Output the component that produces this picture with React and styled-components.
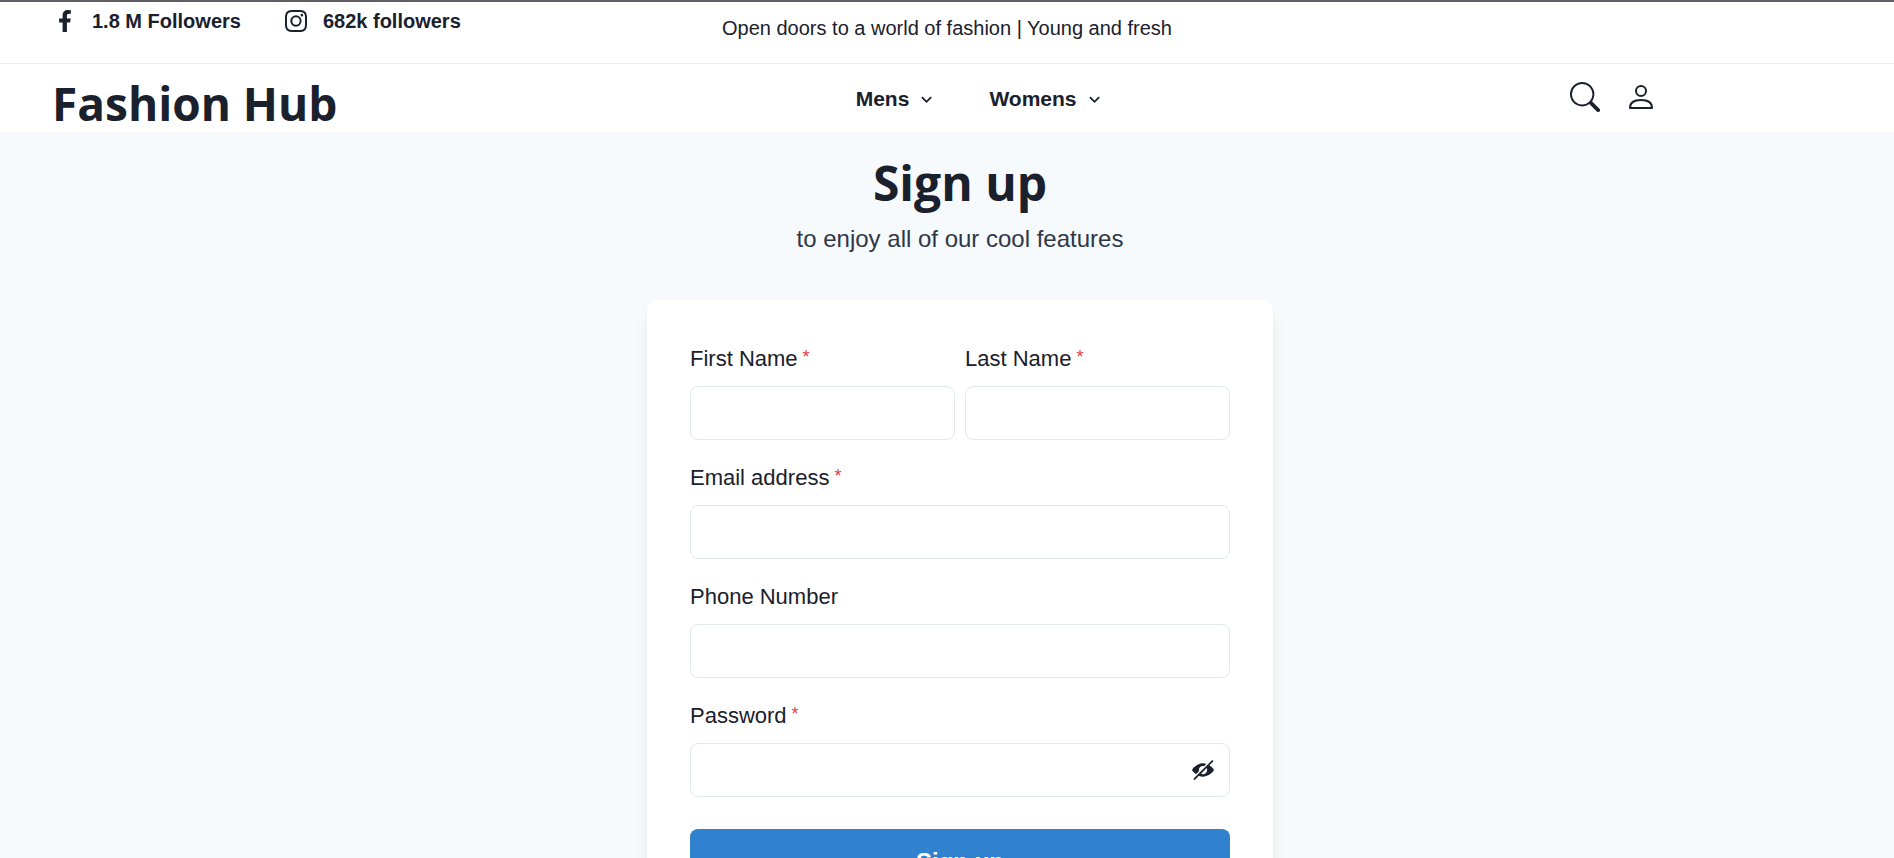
import React, { useState } from "react";
import styled, { createGlobalStyle } from "styled-components";
import { BsInstagram, BsSearch } from "react-icons/bs";
import { FaFacebookF } from "react-icons/fa";

const GlobalStyle = createGlobalStyle`
  *, *::before, *::after { box-sizing: border-box; }
  html { scrollbar-width: none; }
  body {
    margin: 0;
    background: #f7fafc;
    color: #1a202c;
    font-family: "Liberation Sans", Arial, sans-serif;
    font-size: 22px;
    line-height: 32px;
  }
  h1, p { margin: 0; }
  svg { display: block; flex-shrink: 0; }
`;

const TopBar = styled.div`
  display: grid;
  grid-template-columns: 1fr auto 1fr;
  align-items: start;
  height: 64px;
  padding: 3px 54px 0;
  background: #fff;
  border-top: 2px solid #615d64;
  border-bottom: 1px solid #ebebed;
`;

const Followers = styled.div`
  display: flex;
  gap: 44px;
`;

const FollowerLink = styled.a`
  display: flex;
  align-items: center;
  gap: 16px;
  color: inherit;
  font-size: 20px;
  font-weight: 700;
  line-height: 32px;
  text-decoration: none;
`;

const Tagline = styled.p`
  padding-top: 7px;
  font-size: 20px;
  line-height: 32px;
`;

const Header = styled.header`
  display: grid;
  grid-template-columns: 45% 40% 15%;
  height: 68px;
  padding: 0 56px 0 52px;
  background: #fff;
`;

const Title = styled.h1`
  font-family: "Open Sans", "Noto Sans", sans-serif;
  font-size: ${({ $size = 46 }) => $size}px;
  font-weight: 700;
  line-height: 60px;
`;

const Logo = styled(Title).attrs({ as: "a", href: "#home" })`
  padding-top: 9px;
  color: inherit;
  text-decoration: none;
  white-space: nowrap;
`;

const Nav = styled.nav`
  display: flex;
  align-items: flex-start;
  gap: 52px;
  padding-top: 19px;
`;

const PlainButton = styled.button`
  display: flex;
  align-items: center;
  padding: 0;
  border: 0;
  background: none;
  color: inherit;
  font: inherit;
  cursor: pointer;
`;

const NavButton = styled(PlainButton)`
  gap: 7px;
  font-size: 21px;
  font-weight: 700;
`;

const Actions = styled.div`
  display: flex;
  align-items: center;
  align-self: start;
  gap: 29px;
  padding-top: 18px;
`;

const Main = styled.main`
  display: flex;
  flex-direction: column;
  align-items: center;
  padding: 21px 0 65px 26px;
  text-align: center;
`;

const Subtitle = styled.p`
  padding: 8px 0 43px;
  color: #2d3748;
  font-size: 24px;
  line-height: 36px;
`;

const Card = styled.form`
  display: flex;
  flex-direction: column;
  gap: 22px;
  width: 100%;
  max-width: 626px;
  padding: 43px;
  border-radius: 11px;
  background: #fff;
  box-shadow: 0 14px 20px -4px rgba(0, 0, 0, 0.1), 0 5px 8px -3px rgba(0, 0, 0, 0.05);
  text-align: left;
`;

const NameRow = styled.div`
  display: grid;
  grid-template-columns: 1fr 1fr;
  gap: 10px;
`;

const FieldBox = styled.div`
  display: flex;
  flex-direction: column;
  gap: 11px;
`;

const Label = styled.label`
  font-size: 22px;
  line-height: 32px;
`;

const Star = styled.span`
  color: #e53e3e;
  font-size: 18px;
  line-height: 18px;
  vertical-align: 3px;
`;

const InputWrap = styled.div`
  position: relative;
`;

const Input = styled.input`
  display: block;
  width: 100%;
  height: 54px;
  padding: 0 21px;
  border: 1px solid #e2e8f0;
  border-radius: 8px;
  background: #fff;
  color: inherit;
  font: inherit;
`;

const RevealButton = styled(PlainButton)`
  position: absolute;
  top: 0;
  right: 0;
  justify-content: center;
  width: 54px;
  height: 54px;
`;

const SubmitButton = styled.button`
  height: 65px;
  margin-top: 10px;
  border: 0;
  border-radius: 8px;
  background: #3182ce;
  color: #fff;
  font: inherit;
  font-size: 24px;
  font-weight: 700;
  cursor: pointer;
`;

const ChevronDown = () => (
  <svg width="21" height="21" viewBox="0 0 24 24" fill="currentColor" aria-hidden="true">
    <path d="M16.59 8.59L12 13.17 7.41 8.59 6 10l6 6 6-6z" />
  </svg>
);

const Person = () => (
  <svg
    width="24"
    height="24"
    viewBox="0 0 24 24"
    fill="none"
    stroke="currentColor"
    strokeWidth="2"
    strokeLinejoin="round"
    aria-hidden="true"
  >
    <circle cx="12" cy="6" r="5" />
    <path d="M1 23h22c0-5-4-8-11-8S1 18 1 23z" />
  </svg>
);

const EyeOff = () => (
  <svg width="22" height="22" viewBox="0 0 24 24" fill="currentColor" aria-hidden="true">
    <path d="M23.2,10.549a20.954,20.954,0,0,0-4.3-3.6l4-3.995a1,1,0,1,0-1.414-1.414l-.018.018a.737.737,0,0,1-.173.291l-19.5,19.5c-.008.007-.018.009-.026.017a1,1,0,0,0,1.631,1.088l4.146-4.146a11.26,11.26,0,0,0,4.31.939h.3c4.256,0,8.489-2.984,11.051-5.8A2.171,2.171,0,0,0,23.2,10.549ZM16.313,13.27a4.581,4.581,0,0,1-3,3.028,4.3,4.3,0,0,1-3.1-.19.253.253,0,0,1-.068-.407l5.56-5.559a.252.252,0,0,1,.407.067A4.3,4.3,0,0,1,16.313,13.27Z" />
    <path d="M7.615,13.4a.244.244,0,0,0,.061-.24A4.315,4.315,0,0,1,7.5,12,4.5,4.5,0,0,1,12,7.5a4.276,4.276,0,0,1,1.16.173.244.244,0,0,0,.24-.062l1.941-1.942a.254.254,0,0,0-.1-.421A10.413,10.413,0,0,0,12,4.75C7.7,4.692,3.4,7.7.813,10.549a2.15,2.15,0,0,0-.007,2.9,21.209,21.209,0,0,0,3.438,3.03.256.256,0,0,0,.326-.029Z" />
  </svg>
);

function Field({ id, label, type = "text", required, children }) {
  return (
    <FieldBox>
      <Label htmlFor={id}>
        {label}
        {required && <Star aria-hidden="true"> *</Star>}
      </Label>
      <InputWrap>
        <Input id={id} name={id} type={type} required={required} />
        {children}
      </InputWrap>
    </FieldBox>
  );
}

export default function App() {
  const [visible, setVisible] = useState(false);
  return (
    <>
      <GlobalStyle />
      <TopBar>
        <Followers>
          <FollowerLink href="#facebook">
            <FaFacebookF size={22} />
            1.8 M Followers
          </FollowerLink>
          <FollowerLink href="#instagram">
            <BsInstagram size={22} />
            682k followers
          </FollowerLink>
        </Followers>
        <Tagline>Open doors to a world of fashion | Young and fresh</Tagline>
      </TopBar>
      <Header>
        <Logo>Fashion Hub</Logo>
        <Nav>
          <NavButton type="button">
            Mens <ChevronDown />
          </NavButton>
          <NavButton type="button">
            Womens <ChevronDown />
          </NavButton>
        </Nav>
        <Actions>
          <PlainButton type="button" aria-label="Search">
            <BsSearch size={30} />
          </PlainButton>
          <PlainButton type="button" aria-label="Account">
            <Person />
          </PlainButton>
        </Actions>
      </Header>
      <Main>
        <Title $size={48}>Sign up</Title>
        <Subtitle>to enjoy all of our cool features</Subtitle>
        <Card onSubmit={(event) => event.preventDefault()}>
          <NameRow>
            <Field id="firstName" label="First Name" required />
            <Field id="lastName" label="Last Name" required />
          </NameRow>
          <Field id="email" label="Email address" type="email" required />
          <Field id="phone" label="Phone Number" type="tel" />
          <Field id="password" label="Password" type={visible ? "text" : "password"} required>
            <RevealButton
              type="button"
              aria-label="Toggle password visibility"
              onClick={() => setVisible(!visible)}
            >
              <EyeOff />
            </RevealButton>
          </Field>
          <SubmitButton type="submit">Sign up</SubmitButton>
        </Card>
      </Main>
    </>
  );
}
